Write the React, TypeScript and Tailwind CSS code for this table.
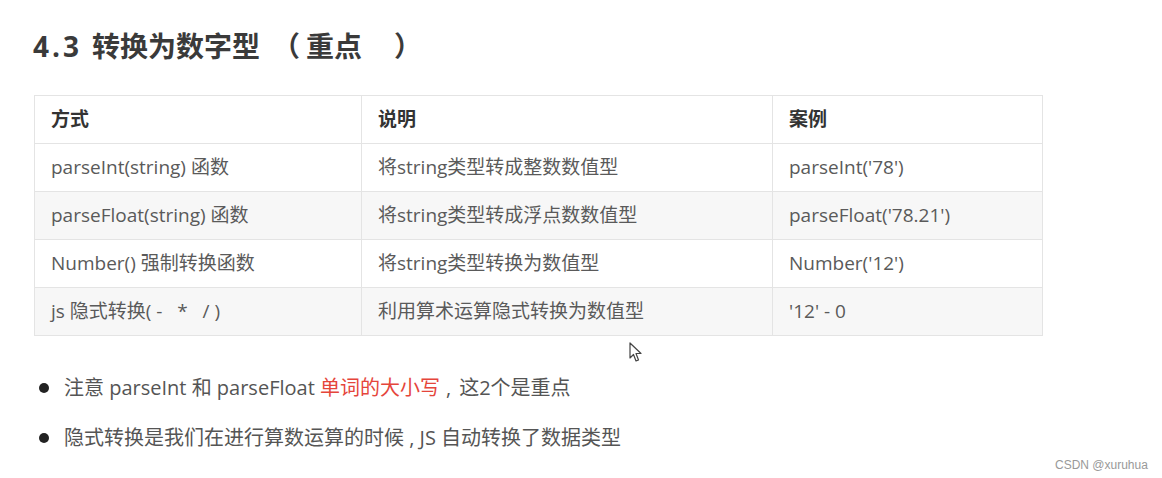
const rows = [
  ['parseInt(string) 函数', '将string类型转成整数数值型', "parseInt('78')"],
  ['parseFloat(string) 函数', '将string类型转成浮点数数值型', "parseFloat('78.21')"],
  ['Number() 强制转换函数', '将string类型转换为数值型', "Number('12')"],
  ['js 隐式转换( -   *   / )', '利用算术运算隐式转换为数值型', "'12' - 0"],
];

const Cursor = () => (
  <svg className="absolute left-[629px] top-[342px]" width="14" height="22" viewBox="0 0 14 22">
    <path d="M1 1 L1 16 L4.5 12.5 L7 19 L9.5 18 L7 11.5 L12 11.5 Z" fill="#fff" stroke="#444" strokeWidth="1.2" strokeLinejoin="round" />
  </svg>
);

const App = () => {
  return (
    <div
      className="relative h-[478px] w-[1162px] overflow-hidden bg-white"
      style={{ fontFamily: '"Open Sans", "Noto Sans CJK SC", sans-serif' }}
    >
      <h1 className="flex pl-[33px] pt-[25px] text-[28px] font-bold leading-[42px] text-[#3a3a3a]">
        <span className="mr-[10px] tracking-[3px]">4.3</span>
        <span>转换为数字型</span>
        <span className="ml-[12px]">（</span>
        <span className="ml-[6px]">重点</span>
        <span className="ml-[32px]">）</span>
      </h1>

      <table className="ml-[34px] mt-[28px] w-[1008px] table-fixed border-collapse text-[19px] text-[#5a5a5a]">
        <colgroup>
          <col className="w-[327px]" />
          <col className="w-[411px]" />
          <col className="w-[270px]" />
        </colgroup>
        <thead>
          <tr className="h-[48px]">
            <th className="border border-[#e4e4e4] pl-[16px] text-left font-bold text-[#333]">方式</th>
            <th className="border border-[#e4e4e4] pl-[16px] text-left font-bold text-[#333]">说明</th>
            <th className="border border-[#e4e4e4] pl-[16px] text-left font-bold text-[#333]">案例</th>
          </tr>
        </thead>
        <tbody>
          {rows.map((r, i) => (
            <tr key={i} className={i % 2 === 0 ? 'h-[48px] bg-white' : 'h-[48px] bg-[#f7f7f7]'}>
              {r.map((c, j) => (
                <td key={j} className="whitespace-pre border border-[#e4e4e4] pl-[16px]">
                  {c}
                </td>
              ))}
            </tr>
          ))}
        </tbody>
      </table>

      <ul className="mt-[37px] flex flex-col gap-[20px] pl-[39px] text-[20px] leading-[30px] text-[#555]">
        <li className="flex items-center whitespace-pre">
          <span className="mr-[15px] h-[10px] w-[10px] rounded-full bg-[#222]" />
          注意 parseInt 和 parseFloat <span className="text-[#e5453b]">单词的大小写</span>
          <span className="ml-[6px]">,</span>
          <span className="ml-[8px]">这2个是重点</span>
        </li>
        <li className="flex items-center whitespace-pre">
          <span className="mr-[15px] h-[10px] w-[10px] rounded-full bg-[#222]" />
          隐式转换是我们在进行算数运算的时候 , JS 自动转换了数据类型
        </li>
      </ul>

      <Cursor />

      <span
        className="absolute left-[1055px] top-[456px] text-[12px] text-[#999]"
        style={{ fontFamily: '"Liberation Sans", sans-serif' }}
      >
        CSDN @xuruhua
      </span>
    </div>
  );
};

export default App;
